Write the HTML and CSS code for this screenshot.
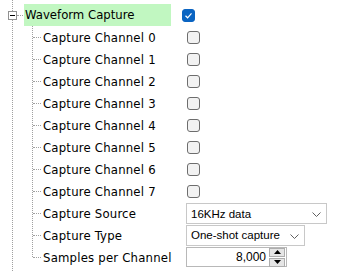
FILE: index.html
```html
<!DOCTYPE html>
<html lang="en">
<head>
  <meta charset="UTF-8">
  <title>Waveform Capture</title>
  <link rel="stylesheet" href="styles.css">
</head>
<body>

<div class="tree">
  <div class="row head">
    <span class="toggle"></span>
    <span class="label sel">Waveform Capture</span>
    <span class="value">
      <span class="check on">
        <svg width="9" height="9" viewBox="0 0 9 9"><path d="M1.5 4.8 L3.6 6.8 L7.5 2.4" fill="none" stroke="#fff" stroke-width="1.2"/></svg>
      </span>
    </span>
  </div>

  <div class="children">
    <div class="row"><span class="label">Capture Channel 0</span><span class="value"><span class="check"></span></span></div>
    <div class="row"><span class="label">Capture Channel 1</span><span class="value"><span class="check"></span></span></div>
    <div class="row"><span class="label">Capture Channel 2</span><span class="value"><span class="check"></span></span></div>
    <div class="row"><span class="label">Capture Channel 3</span><span class="value"><span class="check"></span></span></div>
    <div class="row"><span class="label">Capture Channel 4</span><span class="value"><span class="check"></span></span></div>
    <div class="row"><span class="label">Capture Channel 5</span><span class="value"><span class="check"></span></span></div>
    <div class="row"><span class="label">Capture Channel 6</span><span class="value"><span class="check"></span></span></div>
    <div class="row"><span class="label">Capture Channel 7</span><span class="value"><span class="check"></span></span></div>
    <div class="row">
      <span class="label">Capture Source</span>
      <span class="value">
        <span class="combo wide">16KHz data
          <svg class="chev" width="9" height="5" viewBox="0 0 9 5"><path d="M0.5 0.5 L4.5 4.5 L8.5 0.5" fill="none" stroke="#606060" stroke-width="1"/></svg>
        </span>
      </span>
    </div>
    <div class="row">
      <span class="label">Capture Type</span>
      <span class="value">
        <span class="combo narrow">One-shot capture
          <svg class="chev" width="9" height="5" viewBox="0 0 9 5"><path d="M0.5 0.5 L4.5 4.5 L8.5 0.5" fill="none" stroke="#606060" stroke-width="1"/></svg>
        </span>
      </span>
    </div>
    <div class="row">
      <span class="label">Samples per Channel</span>
      <span class="value">
        <span class="spin">
          <span class="num">8,000</span>
          <span class="btns">
            <span class="btn"><svg width="7" height="4" viewBox="0 0 7 4"><path d="M0 4 L3.5 0 L7 4 Z" fill="#000"/></svg></span>
            <span class="btn"><svg width="7" height="4" viewBox="0 0 7 4"><path d="M0 0 L3.5 4 L7 0 Z" fill="#000"/></svg></span>
          </span>
        </span>
      </span>
    </div>
  </div>
</div>

</body>
</html>
```

FILE: styles.css
```css
body {
  margin: 0;
  background: #fff;
  font-family: "DejaVu Sans Condensed", "DejaVu Sans", sans-serif;
  font-size: 13px;
  color: #000;
}
.tree {
  position: relative;
  height: 271px;
  padding-top: 4px;
  box-sizing: border-box;
}
/* outer tree guide */
.tree::before {
  content: "";
  position: absolute;
  left: 12px;
  top: 0;
  bottom: 0;
  border-left: 1px dotted #a0a0a0;
}
.row {
  display: flex;
  align-items: center;
  height: 22px;
  position: relative;
}
.head .toggle {
  position: relative;
  width: 24px;
  height: 22px;
  flex: none;
}
/* plus/minus box */
.head .toggle::before {
  content: "";
  position: absolute;
  left: 8px;
  top: 7px;
  width: 7px;
  height: 7px;
  border: 1px solid #919191;
  background: #fff linear-gradient(#000, #000) no-repeat center / 5px 1px;
  z-index: 1;
}
/* connector from box to label */
.head .toggle::after {
  content: "";
  position: absolute;
  left: 17px;
  width: 6px;
  top: 11px;
  border-top: 1px dotted #a0a0a0;
}
.head .label {
  width: 147px;
  height: 22px;
  line-height: 22px;
  padding-left: 1px;
  box-sizing: border-box;
}
.label.sel {
  background: #c1f7c1;
}
.head .value {
  margin-left: 11px;
}
.children {
  position: relative;
  margin-left: 32px;
}
.children::before {
  content: "";
  position: absolute;
  left: 0;
  top: 0;
  bottom: 11px;
  border-left: 1px dotted #a0a0a0;
}
.children .row::before {
  content: "";
  position: absolute;
  left: 1px;
  width: 8px;
  top: 11px;
  border-top: 1px dotted #a0a0a0;
}
.children .label {
  width: 154px;
  padding-left: 11px;
  box-sizing: border-box;
  white-space: nowrap;
  letter-spacing: 0.2px;
}
.value {
  display: flex;
  align-items: center;
}
.check {
  width: 11px;
  height: 11px;
  border: 1px solid #6d6d6d;
  border-radius: 3px;
  background: #f2f2f2;
  display: flex;
  align-items: center;
  justify-content: center;
}
.children .check {
  margin-left: 1px;
}
.check.on {
  background: #0a64c2;
  border-color: #0a64c2;
}
.combo {
  position: relative;
  display: flex;
  align-items: center;
  height: 21px;
  border: 1px solid #c8c8c8;
  box-sizing: border-box;
  padding-left: 4px;
  font-family: "Liberation Sans", Arial, sans-serif;
  font-size: 11.5px;
  background: #fff;
}
.combo.wide {
  width: 141px;
  margin-top: 1px;
}
.combo.narrow {
  width: 119px;
}
.chev {
  position: absolute;
  right: 5px;
  top: 8px;
}
.spin {
  display: flex;
  align-items: center;
  width: 101px;
  height: 20px;
  border: 1px solid #b8b8b8;
  box-sizing: border-box;
  font-family: "Liberation Sans", Arial, sans-serif;
  font-size: 12px;
}
.num {
  flex: 1;
  text-align: right;
  padding-right: 3px;
}
.btns {
  display: flex;
  flex-direction: column;
  gap: 1px;
  margin-right: 1px;
}
.btn {
  width: 14px;
  height: 7px;
  border: 1px solid #adadad;
  background: #e5e5e5;
  display: flex;
  align-items: center;
  justify-content: center;
}
```
